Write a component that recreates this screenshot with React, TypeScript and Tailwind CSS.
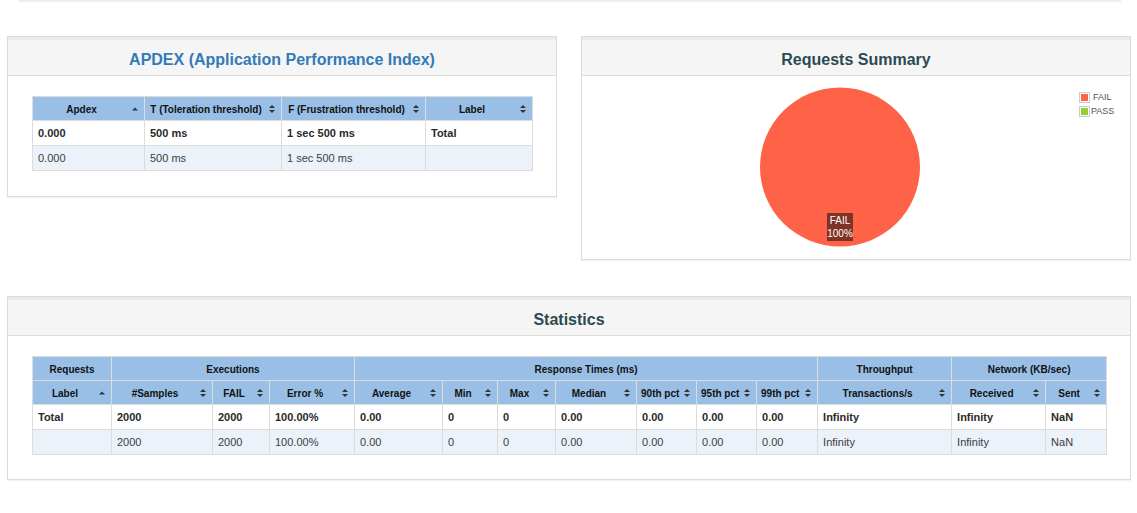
import React from "react";

const FONT = { fontFamily: '"Liberation Sans", Arial, sans-serif' };

function SortIcon({ asc }: { asc?: boolean }) {
  if (asc) {
    return (
      <svg width="6" height="9" viewBox="0 0 6 9" className="absolute right-[6px] top-1/2 -translate-y-1/2">
        <polygon points="0,6 3,3 6,6" fill="#333" />
      </svg>
    );
  }
  return (
    <svg width="6" height="9" viewBox="0 0 6 9" className="absolute right-[6px] top-1/2 -translate-y-1/2">
      <polygon points="0,3.6 3,0.4 6,3.6" fill="#333" />
      <polygon points="0,5.4 6,5.4 3,8.6" fill="#333" />
    </svg>
  );
}

function Th({ children, asc, sort = true, colSpan }: { children: React.ReactNode; asc?: boolean; sort?: boolean; colSpan?: number }) {
  return (
    <th
      colSpan={colSpan}
      className={`relative h-[24px] border border-[#dcdcdc] bg-[#99bfe6] pt-[2px] text-center align-middle text-[10px] font-bold text-[#111] whitespace-nowrap ${sort ? "pl-[4px] pr-[18px]" : "px-[4px]"}`}
    >
      {children}
      {sort && <SortIcon asc={asc} />}
    </th>
  );
}

function Td({ children, bold }: { children?: React.ReactNode; bold?: boolean }) {
  return (
    <td className={`h-[25px] border border-[#dcdcdc] pl-[5px] text-left align-middle text-[11px] whitespace-nowrap ${bold ? "font-bold text-[#2a2a2a]" : "font-normal text-[#3d3d3d]"}`}>
      {children}
    </td>
  );
}

function Panel({ title, titleClass, children, className }: { title: string; titleClass: string; children: React.ReactNode; className?: string }) {
  return (
    <div className={`border border-[#dddddd] bg-white shadow-[0_1px_1px_rgba(0,0,0,0.05)] ${className ?? ""}`}>
      <div className="h-[3px] bg-[#e9ebee]" />
      <div className="flex h-[36px] items-center justify-center border-b border-[#dddddd] bg-[#f5f5f5] pt-[5px]">
        <h2 className={`text-[16px] font-bold leading-none ${titleClass}`}>{title}</h2>
      </div>
      {children}
    </div>
  );
}

export default function App() {
  const statCols = [79, 101, 57, 85, 88, 55, 58, 81, 60, 60, 61, 134, 94, 61];
  const totalRow = ["Total", "2000", "2000", "100.00%", "0.00", "0", "0", "0.00", "0.00", "0.00", "0.00", "Infinity", "Infinity", "NaN"];
  const row2 = ["", "2000", "2000", "100.00%", "0.00", "0", "0", "0.00", "0.00", "0.00", "0.00", "Infinity", "Infinity", "NaN"];

  return (
    <div className="min-h-[513px] w-full bg-white" style={FONT}>
      <div className="ml-[19px] h-[2px] w-[1102px] bg-[#eeeeee]" />

      <div className="mt-[34px] flex items-start gap-[24px] pl-[7px]">
        <Panel title="APDEX (Application Performance Index)" titleClass="text-[#337ab7]" className="w-[550px]">
          <div className="px-[24px] pt-[20px] pb-[25px]">
            <table className="w-full table-fixed border-collapse">
              <colgroup>
                <col style={{ width: 112 }} />
                <col style={{ width: 137 }} />
                <col style={{ width: 144 }} />
                <col style={{ width: 107 }} />
              </colgroup>
              <thead>
                <tr>
                  <Th asc>Apdex</Th>
                  <Th>T (Toleration threshold)</Th>
                  <Th>F (Frustration threshold)</Th>
                  <Th>Label</Th>
                </tr>
              </thead>
              <tbody>
                <tr className="bg-white">
                  <Td bold>0.000</Td>
                  <Td bold>500 ms</Td>
                  <Td bold>1 sec 500 ms</Td>
                  <Td bold>Total</Td>
                </tr>
                <tr className="bg-[#ebf2fa]">
                  <Td>0.000</Td>
                  <Td>500 ms</Td>
                  <Td>1 sec 500 ms</Td>
                  <Td></Td>
                </tr>
              </tbody>
            </table>
          </div>
        </Panel>

        <Panel title="Requests Summary" titleClass="text-[#2c4a52]" className="w-[550px]">
          <div className="relative h-[183px]">
            <svg width="548" height="183" className="absolute left-0 top-0">
              <ellipse cx="258" cy="91" rx="80" ry="79.5" fill="#ff6347" />
            </svg>
            <div className="absolute left-[245px] top-[137px] flex h-[28px] w-[26px] flex-col items-center justify-center bg-[#803224] text-[10px] leading-[13px] text-white">
              <span>FAIL</span>
              <span>100%</span>
            </div>
            <div className="absolute left-[497px] top-[16px] flex flex-col gap-[3px] text-[9px] leading-[11px] text-[#545454]">
              <div className="flex items-center gap-[3px]">
                <div className="border border-[#cccccc] p-[1px]">
                  <div className="h-[7px] w-[7px] bg-[#ff6347]" />
                </div>
                <span>FAIL</span>
              </div>
              <div className="flex items-center gap-[1px]">
                <div className="border border-[#cccccc] p-[1px]">
                  <div className="h-[7px] w-[7px] bg-[#9acd32]" />
                </div>
                <span>PASS</span>
              </div>
            </div>
          </div>
        </Panel>
      </div>

      <div className="mt-[36px] pl-[7px]">
        <Panel title="Statistics" titleClass="text-[#2c4a52]" className="w-[1124px]">
          <div className="px-[24px] pt-[20px] pb-[24px]">
            <table className="w-full table-fixed border-collapse">
              <colgroup>
                {statCols.map((w, i) => (
                  <col key={i} style={{ width: w }} />
                ))}
              </colgroup>
              <thead>
                <tr>
                  <Th sort={false}>Requests</Th>
                  <Th sort={false} colSpan={3}>Executions</Th>
                  <Th sort={false} colSpan={7}>Response Times (ms)</Th>
                  <Th sort={false}>Throughput</Th>
                  <Th sort={false} colSpan={2}>Network (KB/sec)</Th>
                </tr>
                <tr>
                  <Th asc>Label</Th>
                  <Th>#Samples</Th>
                  <Th>FAIL</Th>
                  <Th>Error %</Th>
                  <Th>Average</Th>
                  <Th>Min</Th>
                  <Th>Max</Th>
                  <Th>Median</Th>
                  <Th>90th pct</Th>
                  <Th>95th pct</Th>
                  <Th>99th pct</Th>
                  <Th>Transactions/s</Th>
                  <Th>Received</Th>
                  <Th>Sent</Th>
                </tr>
              </thead>
              <tbody>
                <tr className="bg-white">
                  {totalRow.map((v, i) => (
                    <Td key={i} bold>
                      {v}
                    </Td>
                  ))}
                </tr>
                <tr className="bg-[#ebf2fa]">
                  {row2.map((v, i) => (
                    <Td key={i}>{v}</Td>
                  ))}
                </tr>
              </tbody>
            </table>
          </div>
        </Panel>
      </div>
    </div>
  );
}
